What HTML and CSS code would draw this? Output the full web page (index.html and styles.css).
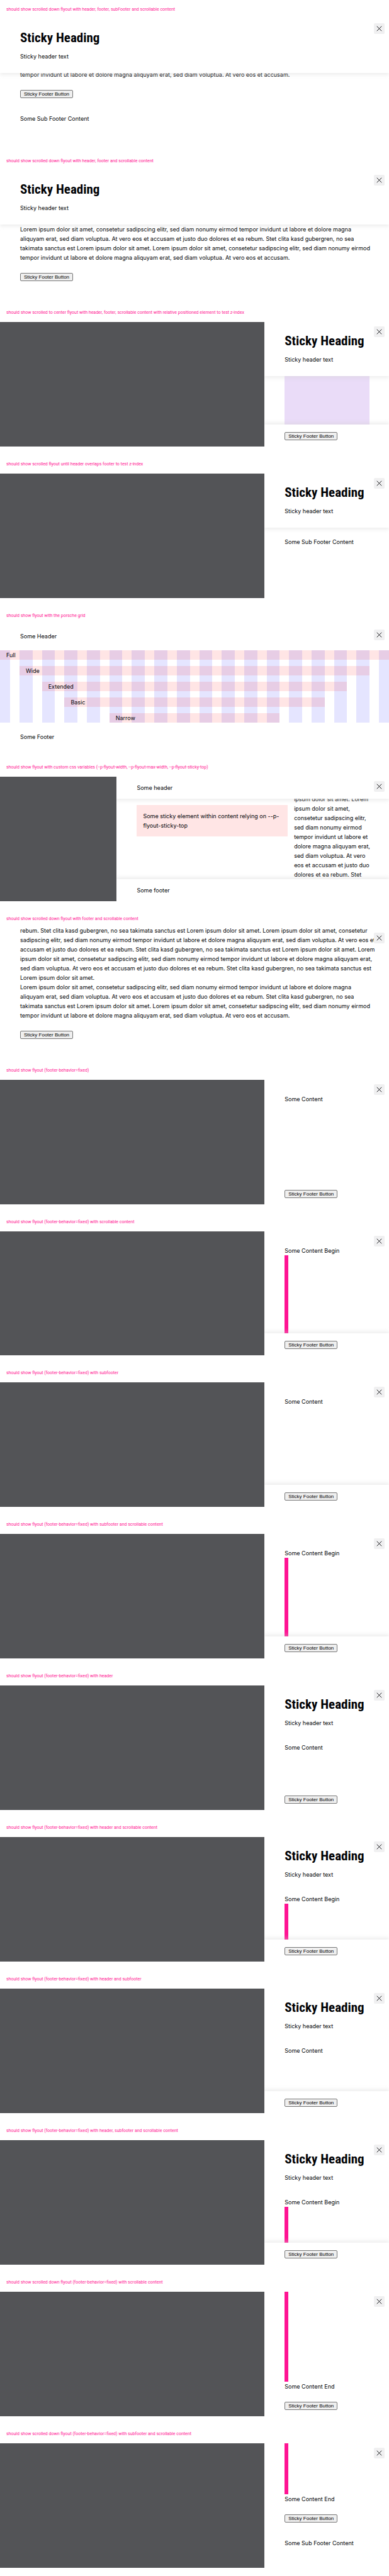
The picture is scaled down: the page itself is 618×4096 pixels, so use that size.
FILE: index.html
```
<!DOCTYPE html>
<html lang="en">
<head>
<meta charset="utf-8">
<title>Flyout states</title>
<link rel="stylesheet" href="styles.css">
</head>
<body>
<svg class="sprite" aria-hidden="true"><symbol id="close" viewBox="0 0 24 24"><path d="M6 6l12 12M18 6L6 18" fill="none" stroke="currentColor" stroke-width="1.4"/></symbol></svg>
<main class="states">

<section class="state">
<h2 class="label">should show scrolled down flyout with header, footer, subFooter and scrollable content</h2>
<div class="flyout">
<div class="panel panel-full">
<button class="close" type="button" aria-label="Close"><svg><use href="#close"/></svg></button>
<header class="header raised"><h3 class="heading">Sticky Heading</h3><p>Sticky header text</p></header>
<div class="body body-end"><p class="copy">tempor invidunt ut labore et dolore magna aliquyam erat, sed diam voluptua. At vero eos et accusam.</p></div>
<footer class="footer"><button class="action" type="button">Sticky Footer Button</button></footer>
<div class="subfooter">Some Sub Footer Content</div>
</div>
</div>
</section>

<section class="state">
<h2 class="label">should show scrolled down flyout with header, footer and scrollable content</h2>
<div class="flyout">
<div class="panel panel-full">
<button class="close" type="button" aria-label="Close"><svg><use href="#close"/></svg></button>
<header class="header raised"><h3 class="heading">Sticky Heading</h3><p>Sticky header text</p></header>
<div class="body body-end"><p class="copy">Lorem ipsum dolor sit amet, consetetur sadipscing elitr, sed diam nonumy eirmod tempor invidunt ut labore et dolore magna<br>aliquyam erat, sed diam voluptua. At vero eos et accusam et justo duo dolores et ea rebum. Stet clita kasd gubergren, no sea<br>takimata sanctus est Lorem ipsum dolor sit amet. Lorem ipsum dolor sit amet, consetetur sadipscing elitr, sed diam nonumy eirmod<br>tempor invidunt ut labore et dolore magna aliquyam erat, sed diam voluptua. At vero eos et accusam.</p></div>
<footer class="footer footer-last"><button class="action" type="button">Sticky Footer Button</button></footer>
</div>
</div>
</section>

<section class="state">
<h2 class="label">should show scrolled to center flyout with header, footer, scrollable content with relative positioned element to test z-index</h2>
<div class="flyout">
<div class="panel">
<button class="close" type="button" aria-label="Close"><svg><use href="#close"/></svg></button>
<header class="header raised"><h3 class="heading">Sticky Heading</h3><p>Sticky header text</p></header>
<div class="body body-flush"><div class="block"></div></div>
<footer class="footer lifted"><button class="action" type="button">Sticky Footer Button</button></footer>
</div>
</div>
</section>

<section class="state">
<h2 class="label">should show scrolled flyout until header overlaps footer to test z-index</h2>
<div class="flyout">
<div class="panel">
<button class="close" type="button" aria-label="Close"><svg><use href="#close"/></svg></button>
<header class="header raised"><h3 class="heading">Sticky Heading</h3><p>Sticky header text</p></header>
<div class="subfooter">Some Sub Footer Content</div>
</div>
</div>
</section>

<section class="state">
<h2 class="label">should show flyout with the porsche grid</h2>
<div class="flyout">
<div class="panel panel-full">
<button class="close" type="button" aria-label="Close"><svg><use href="#close"/></svg></button>
<header class="header header-plain">Some Header</header>
<div class="layers">
<div class="columns">
<i class="stripe"></i><i class="stripe"></i><i class="stripe"></i><i class="stripe"></i><i class="stripe"></i><i class="stripe"></i><i class="stripe"></i><i class="stripe"></i><i class="stripe"></i><i class="stripe"></i><i class="stripe"></i><i class="stripe"></i><i class="stripe"></i><i class="stripe"></i><i class="stripe"></i><i class="stripe"></i><i class="stripe"></i><i class="stripe"></i>
</div>
<div class="columns columns-rows">
<div class="span span-full">Full</div>
<div class="span span-wide">Wide</div>
<div class="span span-extended">Extended</div>
<div class="span span-basic">Basic</div>
<div class="span span-narrow">Narrow</div>
</div>
</div>
<footer class="footer footer-text">Some Footer</footer>
</div>
</div>
</section>

<section class="state">
<h2 class="label">should show flyout with custom css variables (--p-flyout-width, --p-flyout-max-width, --p-flyout-sticky-top)</h2>
<div class="flyout">
<div class="panel panel-wide">
<button class="close" type="button" aria-label="Close"><svg><use href="#close"/></svg></button>
<header class="header header-plain raised">Some header</header>
<div class="body body-split">
<p class="note">Some sticky element within content relying on --p-<br>flyout-sticky-top</p>
<p class="copy">ipsum dolor sit amet. Lorem<br>ipsum dolor sit amet,<br>consetetur sadipscing elitr,<br>sed diam nonumy eirmod<br>tempor invidunt ut labore et<br>dolore magna aliquyam erat,<br>sed diam voluptua. At vero<br>eos et accusam et justo duo<br>dolores et ea rebum. Stet</p>
</div>
<footer class="footer footer-text lifted">Some footer</footer>
</div>
</div>
</section>

<section class="state">
<h2 class="label">should show scrolled down flyout with footer and scrollable content</h2>
<div class="flyout">
<div class="panel panel-full panel-open">
<button class="close" type="button" aria-label="Close"><svg><use href="#close"/></svg></button>
<div class="body body-end"><p class="copy">rebum. Stet clita kasd gubergren, no sea takimata sanctus est Lorem ipsum dolor sit amet. Lorem ipsum dolor sit amet, consetetur<br>sadipscing elitr, sed diam nonumy eirmod tempor invidunt ut labore et dolore magna aliquyam erat, sed diam voluptua. At vero eos et<br>accusam et justo duo dolores et ea rebum. Stet clita kasd gubergren, no sea takimata sanctus est Lorem ipsum dolor sit amet. Lorem<br>ipsum dolor sit amet, consetetur sadipscing elitr, sed diam nonumy eirmod tempor invidunt ut labore et dolore magna aliquyam erat,<br>sed diam voluptua. At vero eos et accusam et justo duo dolores et ea rebum. Stet clita kasd gubergren, no sea takimata sanctus est<br>Lorem ipsum dolor sit amet.<br>Lorem ipsum dolor sit amet, consetetur sadipscing elitr, sed diam nonumy eirmod tempor invidunt ut labore et dolore magna<br>aliquyam erat, sed diam voluptua. At vero eos et accusam et justo duo dolores et ea rebum. Stet clita kasd gubergren, no sea<br>takimata sanctus est Lorem ipsum dolor sit amet. Lorem ipsum dolor sit amet, consetetur sadipscing elitr, sed diam nonumy eirmod<br>tempor invidunt ut labore et dolore magna aliquyam erat, sed diam voluptua. At vero eos et accusam.</p></div>
<footer class="footer footer-last"><button class="action" type="button">Sticky Footer Button</button></footer>
</div>
</div>
</section>

<section class="state">
<h2 class="label">should show flyout (footer-behavior=fixed)</h2>
<div class="flyout">
<div class="panel">
<button class="close" type="button" aria-label="Close"><svg><use href="#close"/></svg></button>
<div class="body body-first"><p>Some Content</p></div>
<footer class="footer"><button class="action" type="button">Sticky Footer Button</button></footer>
</div>
</div>
</section>

<section class="state">
<h2 class="label">should show flyout (footer-behavior=fixed) with scrollable content</h2>
<div class="flyout">
<div class="panel">
<button class="close" type="button" aria-label="Close"><svg><use href="#close"/></svg></button>
<div class="body body-first body-cut"><p>Some Content Begin</p><div class="bar"></div></div>
<footer class="footer lifted"><button class="action" type="button">Sticky Footer Button</button></footer>
</div>
</div>
</section>

<section class="state">
<h2 class="label">should show flyout (footer-behavior=fixed) with subfooter</h2>
<div class="flyout">
<div class="panel">
<button class="close" type="button" aria-label="Close"><svg><use href="#close"/></svg></button>
<div class="body body-first"><p>Some Content</p></div>
<footer class="footer lifted"><button class="action" type="button">Sticky Footer Button</button></footer>
</div>
</div>
</section>

<section class="state">
<h2 class="label">should show flyout (footer-behavior=fixed) with subfooter and scrollable content</h2>
<div class="flyout">
<div class="panel">
<button class="close" type="button" aria-label="Close"><svg><use href="#close"/></svg></button>
<div class="body body-first body-cut"><p>Some Content Begin</p><div class="bar"></div></div>
<footer class="footer lifted"><button class="action" type="button">Sticky Footer Button</button></footer>
</div>
</div>
</section>

<section class="state">
<h2 class="label">should show flyout (footer-behavior=fixed) with header</h2>
<div class="flyout">
<div class="panel">
<button class="close" type="button" aria-label="Close"><svg><use href="#close"/></svg></button>
<header class="header"><h3 class="heading">Sticky Heading</h3><p>Sticky header text</p></header>
<div class="body"><p>Some Content</p></div>
<footer class="footer"><button class="action" type="button">Sticky Footer Button</button></footer>
</div>
</div>
</section>

<section class="state">
<h2 class="label">should show flyout (footer-behavior=fixed) with header and scrollable content</h2>
<div class="flyout">
<div class="panel">
<button class="close" type="button" aria-label="Close"><svg><use href="#close"/></svg></button>
<header class="header"><h3 class="heading">Sticky Heading</h3><p>Sticky header text</p></header>
<div class="body body-cut"><p>Some Content Begin</p><div class="bar"></div></div>
<footer class="footer lifted"><button class="action" type="button">Sticky Footer Button</button></footer>
</div>
</div>
</section>

<section class="state">
<h2 class="label">should show flyout (footer-behavior=fixed) with header and subfooter</h2>
<div class="flyout">
<div class="panel">
<button class="close" type="button" aria-label="Close"><svg><use href="#close"/></svg></button>
<header class="header"><h3 class="heading">Sticky Heading</h3><p>Sticky header text</p></header>
<div class="body"><p>Some Content</p></div>
<footer class="footer lifted"><button class="action" type="button">Sticky Footer Button</button></footer>
</div>
</div>
</section>

<section class="state">
<h2 class="label">should show flyout (footer-behavior=fixed) with header, subfooter and scrollable content</h2>
<div class="flyout">
<div class="panel">
<button class="close" type="button" aria-label="Close"><svg><use href="#close"/></svg></button>
<header class="header"><h3 class="heading">Sticky Heading</h3><p>Sticky header text</p></header>
<div class="body body-cut"><p>Some Content Begin</p><div class="bar"></div></div>
<footer class="footer lifted"><button class="action" type="button">Sticky Footer Button</button></footer>
</div>
</div>
</section>

<section class="state">
<h2 class="label">should show scrolled down flyout (footer-behavior=fixed) with scrollable content</h2>
<div class="flyout">
<div class="panel">
<button class="close" type="button" aria-label="Close"><svg><use href="#close"/></svg></button>
<div class="body body-end"><div class="bar"></div><p>Some Content End</p></div>
<footer class="footer"><button class="action" type="button">Sticky Footer Button</button></footer>
</div>
</div>
</section>

<section class="state">
<h2 class="label">should show scrolled down flyout (footer-behavior=fixed) with subfooter and scrollable content</h2>
<div class="flyout">
<div class="panel">
<button class="close" type="button" aria-label="Close"><svg><use href="#close"/></svg></button>
<div class="body body-end"><div class="bar"></div><p>Some Content End</p></div>
<footer class="footer"><button class="action" type="button">Sticky Footer Button</button></footer>
<div class="subfooter">Some Sub Footer Content</div>
</div>
</div>
</section>

</main>
</body>
</html>
```
FILE: styles.css
```
* {
  box-sizing: border-box;
}

body {
  margin: 0;
  background: #fff;
  color: #010205;
  font: 9px/15px Inter, "Open Sans", sans-serif;
}

h2, h3, p {
  margin: 0;
}

.sprite {
  display: none;
}

.states {
  display: grid;
  grid-auto-rows: 1fr;
  min-height: 100vh;
}

.state {
  display: grid;
  grid-template-columns: minmax(0, 1fr);
  grid-template-rows: 30px minmax(197px, 1fr);
  padding-bottom: 13px;
}

.label {
  padding-left: 10px;
  color: #ff1493;
  font: 400 7px/30px Roboto, sans-serif;
  white-space: nowrap;
}

.flyout {
  display: flex;
  justify-content: flex-end;
  background: #535457;
}

.panel {
  position: relative;
  display: flex;
  flex-direction: column;
  width: 32%;
  overflow: hidden;
  background: #fff;
}

.panel-wide {
  width: 70%;
}

.panel-full {
  width: 100%;
}

.panel-open {
  overflow: visible;
}

.close {
  position: absolute;
  top: 7px;
  right: 7px;
  z-index: 3;
  display: grid;
  place-items: center;
  width: 17px;
  height: 17px;
  padding: 0;
  border: 0;
  border-radius: 2px;
  background: #f0f0f1;
  color: #010205;
}

.close svg {
  width: 15px;
  height: 15px;
}

.header {
  position: relative;
  z-index: 2;
  padding: 16px 31px 19px 32px;
  background: #fff;
}

.header-plain {
  padding-top: 10px;
  padding-bottom: 10px;
}

.raised {
  box-shadow: 0 3px 6px rgba(204, 204, 204, 0.35);
}

.heading {
  margin-bottom: 8px;
  font: 700 21px/28px "Roboto Condensed", Roboto, sans-serif;
  white-space: nowrap;
}

.body {
  display: flex;
  flex: 1 1 0;
  flex-direction: column;
  min-height: 0;
  padding: 5px 31px 5px 32px;
}

.body-first {
  padding-top: 23px;
}

.body-cut {
  padding-bottom: 0;
}

.body-end {
  justify-content: flex-end;
  padding-top: 0;
}

.body-flush {
  padding-top: 0;
  padding-bottom: 0;
}

.body-split {
  display: grid;
  grid-template-columns: minmax(0, 2fr) minmax(0, 1fr);
  grid-template-rows: minmax(0, 1fr);
  column-gap: 10px;
  padding-top: 0;
  padding-bottom: 0;
}

.body-split .copy {
  align-self: end;
}

.note {
  align-self: start;
  margin-top: 10px;
  padding: 10px;
  background: #ffe5e5;
}

.copy {
  white-space: nowrap;
}

.block {
  flex: 1;
  background: #eadcf8;
}

.bar {
  flex: 1;
  width: 6px;
  background: #ff1493;
}

.footer {
  position: relative;
  z-index: 1;
  display: flex;
  padding: 12px 31px 10px 32px;
  background: #fff;
}

.footer-text {
  padding-top: 10px;
}

.footer-last {
  padding-bottom: 22px;
}

.lifted {
  box-shadow: 0 -3px 6px rgba(204, 204, 204, 0.35);
}

.subfooter {
  padding: 15px 31px 32px 32px;
}

.action {
  height: 13px;
  padding: 0 5px;
  border: 1px solid #767676;
  border-radius: 2px;
  background: #efefef;
  color: #000;
  font: 8px/11px "Liberation Sans", Arial, sans-serif;
}

.layers {
  display: grid;
  margin: 5px 0;
}

.columns {
  display: grid;
  grid-area: 1 / 1;
  grid-template-columns: 16px repeat(16, minmax(0, 1fr)) 16px;
  column-gap: 15px;
}

.columns-rows {
  grid-template-rows: repeat(5, 15px);
  row-gap: 10px;
}

.stripe {
  background: rgba(0, 0, 255, 0.1);
}

.span {
  padding-left: 10px;
  background: rgba(255, 0, 0, 0.1);
}

.span-full {
  grid-area: 1 / 1 / 2 / -1;
}

.span-wide {
  grid-area: 2 / 2 / 3 / -2;
}

.span-extended {
  grid-area: 3 / 3 / 4 / -3;
}

.span-basic {
  grid-area: 4 / 4 / 5 / -4;
}

.span-narrow {
  grid-area: 5 / 6 / 6 / -6;
}
```
